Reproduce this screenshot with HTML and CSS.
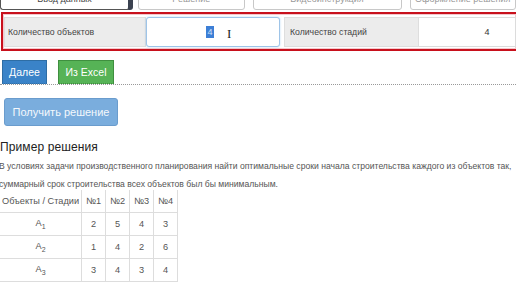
FILE: index.html
```html
<!DOCTYPE html>
<html lang="ru">
<head>
    <meta charset="UTF-8">
    <title>Задача планирования</title>
    <link rel="stylesheet" href="styles.css">
</head>
<body>
    <div class="tabs">
        <div class="tab active">Ввод данных</div>
        <div class="tab">Решение</div>
        <div class="tab wide">Видеоинструкция</div>
        <div class="tab">Оформление решения</div>
    </div>

    <div class="params">
        <div class="param-label">Количество объектов</div>
        <div class="param-input focused"><span class="selected">4</span><span class="ibeam">I</span></div>
        <div class="param-label second">Количество стадий</div>
        <div class="param-input last">4</div>
    </div>

    <div class="actions">
        <button class="btn btn-blue">Далее</button>
        <button class="btn btn-green">Из Excel</button>
    </div>

    <button class="btn-solve">Получить решение</button>

    <h2>Пример решения</h2>
    <p class="task">В условиях задачи производственного планирования найти оптимальные сроки начала строительства каждого из объектов так,<br>суммарный срок строительства всех объектов был бы минимальным.</p>

    <table class="example">
        <tr><th class="first">Объекты / Стадии</th><th>№1</th><th>№2</th><th>№3</th><th>№4</th></tr>
        <tr><td>A<sub>1</sub></td><td>2</td><td>5</td><td>4</td><td>3</td></tr>
        <tr><td>A<sub>2</sub></td><td>1</td><td>4</td><td>2</td><td>6</td></tr>
        <tr><td>A<sub>3</sub></td><td>3</td><td>4</td><td>3</td><td>4</td></tr>
    </table>
</body>
</html>
```

FILE: styles.css
```css
body {
    font-family: 'Liberation Sans', Arial, sans-serif;
    background-color: #fff;
    color: #555;
    margin: 0;
    padding: 0;
    width: 516px;
    height: 290px;
    overflow: hidden;
}

.tabs {
    display: flex;
    margin-top: -13px;
    height: 23px;
    overflow: hidden;
}

.tab {
    box-sizing: border-box;
    height: 23px;
    border: 1px solid #c8c8c8;
    border-radius: 0 0 3px 3px;
    background-color: #fff;
    font-size: 9px;
    color: #999;
    text-align: center;
    padding-top: 6px;
    line-height: 10px;
    width: 113px;
    margin-left: 8px;
    flex-shrink: 1;
    white-space: nowrap;
    overflow: hidden;
}

.tab.active {
    width: 130px;
    flex-shrink: 0;
    margin-left: 0;
    border: 1px solid #555;
    border-right: 2px solid #3b4250;
    box-shadow: 3px 0 0 #3b4250;
    color: #444;
}

.tab.wide {
    width: 149px;
    flex-shrink: 0;
}

.params {
    display: flex;
    align-items: stretch;
    margin-top: 2px;
    margin-left: 1px;
    width: 515px;
    height: 39px;
    box-sizing: border-box;
    border: 2px solid #c8101c;
    border-right: none;
    box-shadow: inset 0 0 0 1px #f4c8cc;
    padding: 3px 0 2px 1px;
}

.param-label {
    box-sizing: border-box;
    flex-shrink: 0;
    background-color: #ececec;
    border: 1px solid #dedede;
    font-size: 8.7px;
    color: #444;
    display: flex;
    align-items: center;
    padding-left: 3px;
    width: 142px;
}

.param-label.second {
    width: 135px;
    padding-left: 5px;
}

.param-input {
    position: relative;
    box-sizing: border-box;
    flex-shrink: 0;
    background-color: #fff;
    border: 1px solid #dcdcdc;
    font-size: 9px;
    color: #333;
    display: flex;
    align-items: center;
    justify-content: center;
    width: 134px;
}

.param-input.focused {
    border: 1px solid #9ec4e8;
    border-radius: 3px;
    box-shadow: 0 0 2px rgba(102, 175, 233, 0.5);
    margin-right: 4px;
    padding-right: 6px;
}

.param-input.last {
    flex: 1;
    border-left: none;
    padding-left: 40px;
}

.selected {
    background-color: #3d7fd6;
    color: #cfe0f7;
    padding: 0 1px;
    line-height: 12px;
}

.ibeam {
    position: absolute;
    left: 80px;
    top: 8px;
    font-family: 'Liberation Serif', serif;
    font-size: 13px;
    color: #222;
}

.actions {
    display: flex;
    gap: 11px;
    margin-top: 9px;
    padding-left: 2px;
    border-bottom: 1px dotted #999;
}

.btn {
    font-family: 'Liberation Sans', Arial, sans-serif;
    font-size: 10.5px;
    color: #fff;
    height: 24px;
    border: 1px solid transparent;
    border-bottom: 1px dotted #223;
    border-radius: 0;
    padding: 0;
    margin: 0;
}

.btn-blue {
    background-color: #3a83c8;
    border-color: #2e6da4;
    width: 45px;
}

.btn-green {
    background-color: #56b356;
    border-color: #3f8f3f;
    width: 56px;
}

.btn-solve {
    display: block;
    margin: 13px 0 0 4px;
    width: 114px;
    height: 28px;
    background-color: #7aaddd;
    border: 1px solid #6a9ccd;
    border-radius: 3px;
    color: #f4f8fc;
    font-family: 'Liberation Sans', Arial, sans-serif;
    font-size: 11px;
    padding: 0;
}

h2 {
    font-size: 12px;
    font-weight: normal;
    letter-spacing: 0.1px;
    color: #222;
    margin: 13px 0 0 0;
    line-height: 16px;
}

.task {
    font-size: 8.6px;
    line-height: 18px;
    margin: 2px 0 0 -1px;
    color: #555;
    white-space: nowrap;
}

.example {
    border-collapse: collapse;
    font-size: 9.2px;
    color: #555;
    margin-top: -3px;
}

.example th,
.example td {
    border: 1px solid #dddddd;
    height: 22px;
    padding: 0;
    text-align: center;
    font-weight: normal;
    width: 23px;
    white-space: nowrap;
}

.example th.first {
    width: 76px;
    padding: 0 2px;
    border-left: none;
}

.example td:first-child {
    border-left: none;
}

.example tr:first-child th {
    border-top: none;
}

sub {
    font-size: 7px;
}
```
